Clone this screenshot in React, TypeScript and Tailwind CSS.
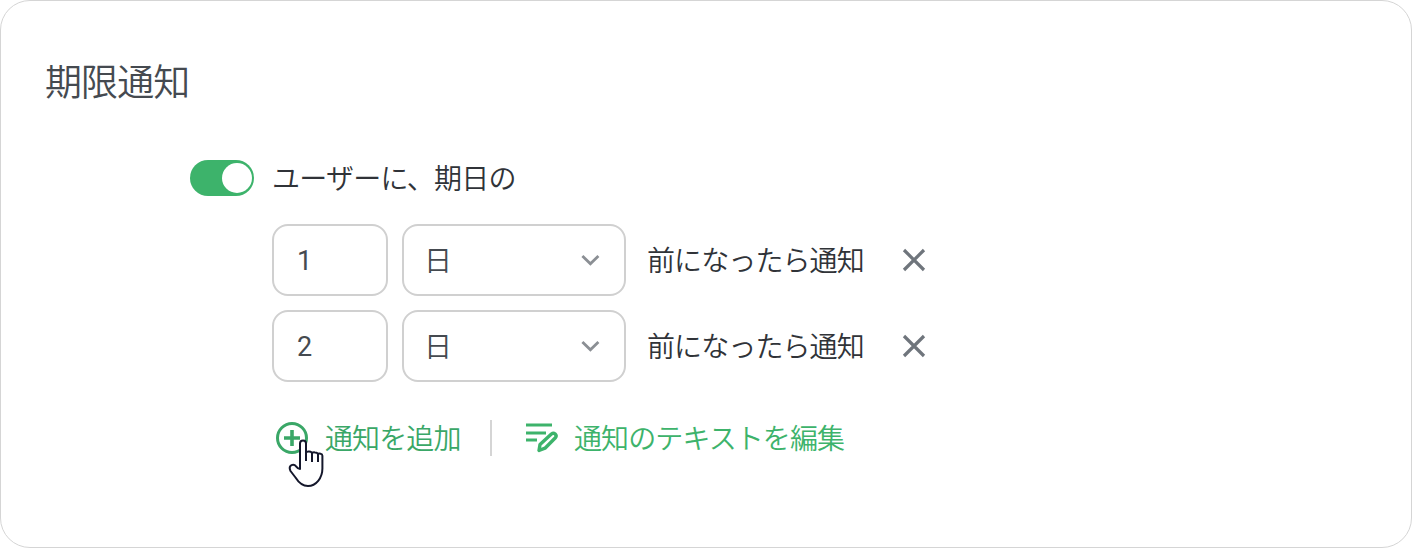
const reminders = [1, 2];

function Toggle() {
  return (
    <button
      type="button"
      role="switch"
      aria-checked="true"
      className="flex h-9 w-16 shrink-0 items-center justify-end rounded-full bg-[#3db36b] pr-0.5"
    >
      <span className="size-[30px] rounded-full bg-white" />
    </button>
  );
}

function ChevronIcon() {
  return (
    <svg width="20" height="12" viewBox="0 0 20 12" fill="none" stroke="#8b8f94" strokeWidth="2.8">
      <path d="M1.4 2 9.4 9.8 17.4 2" />
    </svg>
  );
}

function CloseIcon() {
  return (
    <svg width="24" height="24" viewBox="0 0 24 24" fill="none" stroke="#6f757c" strokeWidth="3.2">
      <path d="M2 2 22 22M22 2 2 22" />
    </svg>
  );
}

function AddIcon() {
  return (
    <svg width="32" height="32" viewBox="0 0 32 32" fill="none" stroke="#3aa767">
      <circle cx="16" cy="16" r="14.5" strokeWidth="3" />
      <path d="M16 8v16M8 16h16" strokeWidth="3.6" />
    </svg>
  );
}

function EditTextIcon() {
  return (
    <svg width="34" height="32" viewBox="0 0 34 32" fill="none" stroke="#3db36b">
      <path d="M0 3h26M0 11h20M0 18h11" strokeWidth="3.2" />
      <path
        d="m13 28.5 1-6L25.4 12q2-1.5 3.8 0 1.8 1.8.2 3.8L19 26.2Z"
        strokeWidth="3.4"
        strokeLinejoin="round"
      />
    </svg>
  );
}

function HandCursor() {
  return (
    <svg
      width="38"
      height="50"
      viewBox="0 0 38 50"
      fill="#fff"
      stroke="#14172b"
      strokeWidth="2"
      strokeLinejoin="round"
      className="pointer-events-none absolute left-[11px] top-[20px]"
    >
      <path d="M13 30V4.500Q13 1.500 16 1.500T19 4.500V14q0-1.500 3-1.400 3 .2 3 2 0-1.500 3-1.200 3 .2 3 2 0-1.200 2.500-.7 1.900.4 1.900 2V29.500C35.400 39 29 47 21 47 15 47 11 42.500 8.500 38.500L3.500 32q-2-4.300 1-5.800 2.700-1.200 4.800 1.500Q11 30 13 30Z" />
      <path d="M19 13v9M25 14v9M31 15v8" fill="none" />
    </svg>
  );
}

function ReminderRow({ value }: { value: number }) {
  return (
    <div className="flex h-[72px] items-center">
      <div className="flex h-[72px] w-[116px] items-center rounded-[16px] border-2 border-[#d0d0d0] pl-[23px] pt-0.5 font-['Roboto'] text-[27px] font-normal tracking-normal text-[#454a50]">
        {value}
      </div>
      <div className="ml-[14px] flex h-[72px] w-56 items-center justify-between rounded-[16px] border-2 border-[#d0d0d0] pl-[20px] pr-[23px] text-[#454a50]">
        <span className="pb-[3px]">日</span>
        <ChevronIcon />
      </div>
      <span className="ml-[21px] w-[217px] whitespace-nowrap pb-[3px]">前になったら通知</span>
      <button type="button" aria-label="削除" className="ml-[38px]">
        <CloseIcon />
      </button>
    </div>
  );
}

export default function App() {
  return (
    <section className="h-[548px] w-[1412px] rounded-[30px] border border-[#d5d5d5] bg-white pl-[45px] pt-[53px] font-['Noto_Sans_CJK_JP',sans-serif] text-[28px] font-[350] leading-9 tracking-[-0.9px] text-[#303338]">
      <h1 className="-ml-px text-[37px] font-[350] leading-[52px] text-[#454a50]">期限通知</h1>
      <div className="ml-36 mt-[54px] flex h-9 items-center">
        <Toggle />
        <span className="ml-[18px] pb-[3px] tracking-[-0.75px]">ユーザーに、期日の</span>
      </div>
      <div className="ml-[226px] mt-7 flex flex-col gap-[14px]">
        {reminders.map((value) => (
          <ReminderRow key={value} value={value} />
        ))}
      </div>
      <div className="ml-[230px] mt-[38px] flex h-9 items-center">
        <button type="button" className="relative flex items-center text-[#3aa767]">
          <AddIcon />
          <span className="ml-[17px] w-[135px] whitespace-nowrap pb-[3px]">通知を追加</span>
          <HandCursor />
        </button>
        <span className="ml-[30px] h-9 w-0.5 bg-[#d5d5d5]" />
        <button type="button" className="ml-[34px] flex items-center text-[#3db36b]">
          <EditTextIcon />
          <span className="ml-[14px] whitespace-nowrap pb-[3px]">通知のテキストを編集</span>
        </button>
      </div>
    </section>
  );
}
